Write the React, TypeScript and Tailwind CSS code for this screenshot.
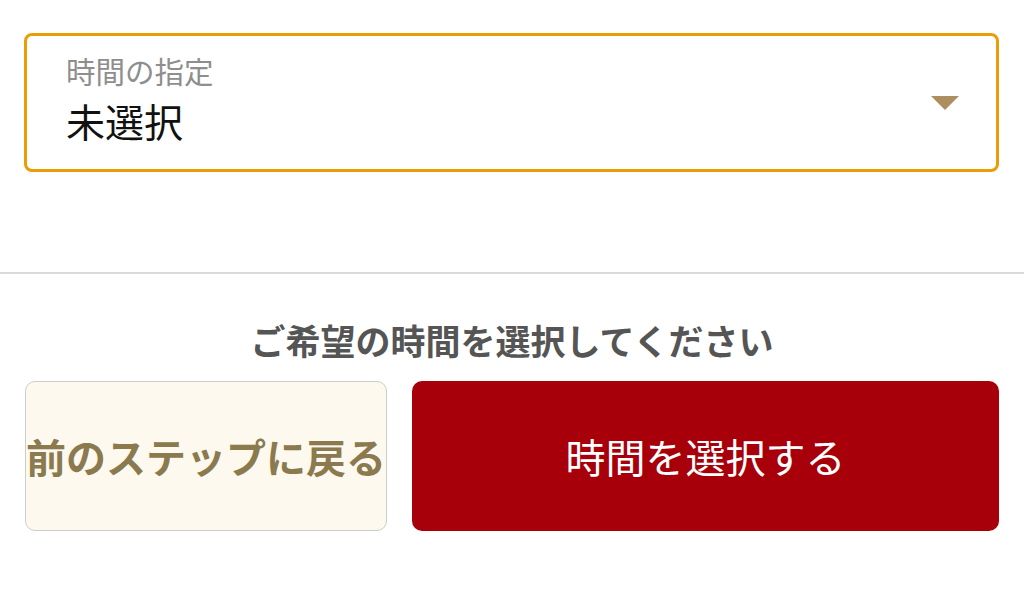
import React from "react";

export default function App() {
  return (
    <div
      className="w-[1024px] h-[607px] bg-white overflow-hidden"
      style={{ fontFamily: '"Noto Sans CJK JP", "Noto Sans", sans-serif' }}
    >
      <div className="pt-[33px] pl-[24px] pr-[25px]">
        <div className="h-[139px] border-[3px] border-[#eb9d05] rounded-[8px] flex items-center justify-between pl-[39px] pr-[37px]">
          <div className="flex flex-col pb-[10px]">
            <div className="text-[29.5px] leading-[32px] text-[#8e8e8e]">時間の指定</div>
            <div className="mt-[12px] text-[39px] leading-[44px] text-[#111111]">未選択</div>
          </div>
          <svg width="28" height="14" viewBox="0 0 28 14">
            <polygon points="0,0 28,0 14,14" fill="#ad8f5f" />
          </svg>
        </div>
      </div>
      <div className="mt-[100px] h-[2px] bg-[#d9d9d9]" />
      <div className="mt-[46px] text-center text-[35px] leading-[40px] font-bold text-[#555555]">
        ご希望の時間を選択してください
      </div>
      <div className="mt-[21px] flex gap-[25px] pl-[25px] pr-[25px]">
        <button className="w-[362px] h-[150px] shrink-0 rounded-[10px] border border-[#cccccc] bg-[#fdf9ee] flex items-center justify-center whitespace-nowrap text-[40px] font-bold text-[#8b7a4e] leading-none overflow-visible">
          前のステップに戻る
        </button>
        <button className="flex-1 h-[150px] rounded-[10px] bg-[#a8000b] flex items-center justify-center text-[40px] text-white leading-none">
          時間を選択する
        </button>
      </div>
    </div>
  );
}
